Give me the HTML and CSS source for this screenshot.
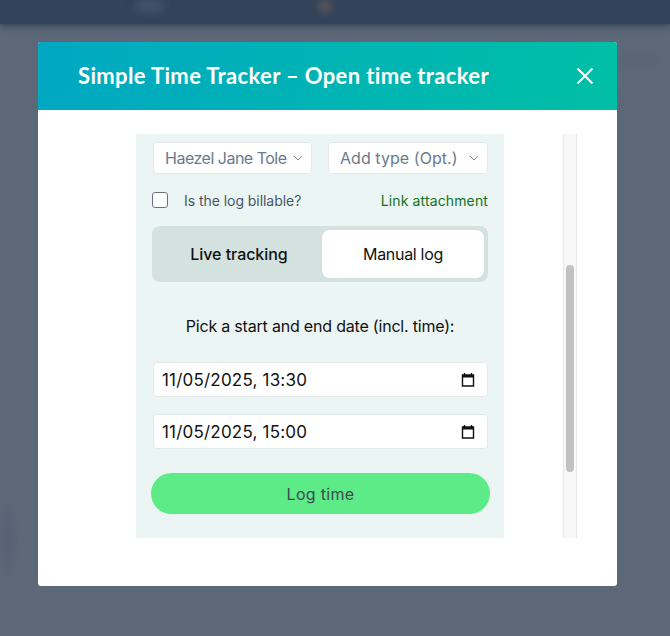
FILE: index.html
```html
<!DOCTYPE html>
<html lang="en">
<head>
  <meta charset="UTF-8">
  <meta name="viewport" content="width=device-width, initial-scale=1.0">
  <title>Simple Time Tracker</title>
  <link rel="stylesheet" href="styles.css">
</head>
<body>

  <div class="backdrop">
    <div class="topbar">
      <span class="blob blob-nav"></span>
      <span class="blob blob-avatar"></span>
    </div>
  </div>

  <div class="modal">
    <div class="modal-header">
      <h2>Simple Time Tracker – Open time tracker</h2>
      <svg class="close" width="20" height="20" viewBox="0 0 20 20">
        <path d="M2.5 2.5 L17.5 17.5 M17.5 2.5 L2.5 17.5" />
      </svg>
    </div>

    <div class="modal-body">
      <div class="frame">
        <div class="tracker">
          <div class="select-row">
            <div class="select select-person">
              <span>Haezel Jane Tole</span>
              <svg width="10" height="6" viewBox="0 0 10 6"><path d="M1 1 L5 5 L9 1" /></svg>
            </div>
            <div class="select select-type">
              <span>Add type (Opt.)</span>
              <svg width="10" height="6" viewBox="0 0 10 6"><path d="M1 1 L5 5 L9 1" /></svg>
            </div>
          </div>

          <div class="billable-row">
            <label class="billable">
              <input type="checkbox">
              Is the log billable?
            </label>
            <a class="attach" href="#">Link attachment</a>
          </div>

          <div class="toggle">
            <div class="toggle-item">Live tracking</div>
            <div class="toggle-item active">Manual log</div>
          </div>

          <p class="pick">Pick a start and end date (incl. time):</p>

          <div class="date-input">
            <span>11/05/2025, 13:30</span>
            <svg width="16" height="16" viewBox="0 0 16 16"><path d="M4.5 1 V3 M11.5 1 V3 M2.5 3 H13.5 V14 H2.5 Z" class="cal-outline" /><path d="M2.5 3 H13.5 V5.5 H2.5 Z" class="cal-top" /></svg>
          </div>
          <div class="date-input">
            <span>11/05/2025, 15:00</span>
            <svg width="16" height="16" viewBox="0 0 16 16"><path d="M4.5 1 V3 M11.5 1 V3 M2.5 3 H13.5 V14 H2.5 Z" class="cal-outline" /><path d="M2.5 3 H13.5 V5.5 H2.5 Z" class="cal-top" /></svg>
          </div>

          <button class="log-btn">Log time</button>
        </div>
      </div>
      <div class="scrollbar"><div class="thumb"></div></div>
    </div>
  </div>

</body>
</html>
```

FILE: styles.css
```css
html, body { height: 100%; }
body {
  margin: 0;
  background: #5c6778;
  font-family: Inter, "Liberation Sans", sans-serif;
  overflow: hidden;
}

.backdrop {
  height: 100%;
  background:
    radial-gradient(ellipse 30px 10px at 640px 60px, #586474, #5c677800),
    radial-gradient(ellipse 12px 40px at 8px 540px, #566174, #5c677800);
}
.topbar {
  height: 24px;
  background: #334359;
  box-shadow: 0 2px 6px #334359;
  display: flex;
  gap: 155px;
  padding-left: 135px;
}
.blob { display: block; height: 12px; border-radius: 6px; filter: blur(4px); }
.blob-nav { width: 30px; background: #46536a; }
.blob-avatar { width: 10px; background: #6b5f5c; }

.modal {
  position: absolute;
  top: 42px;
  left: 38px;
  width: 579px;
  height: 544px;
  background: white;
  border-radius: 3px;
  overflow: hidden;
}
.modal-header {
  height: 68px;
  padding: 0 22px 0 40px;
  display: flex;
  align-items: center;
  justify-content: space-between;
  background: linear-gradient(100deg, #00a8c2, #00bfa6);
}
.modal-header h2 {
  margin: 0 0 2px;
  color: white;
  font-family: Lato, sans-serif;
  font-size: 22px;
  font-weight: 700;
  letter-spacing: 0.36px;
}
.close { fill: none; stroke: white; stroke-width: 2; }

.modal-body {
  display: flex;
  padding: 24px 40px 0 98px;
  gap: 59px;
  height: 404px;
}
.frame { width: 368px; background: #ebf5f3; }
.tracker { padding: 8px 16px 0 16px; }

.select-row { display: flex; gap: 16px; padding-left: 1px; }
.select {
  height: 32px;
  padding: 0 8px 0 11px;
  display: flex;
  align-items: center;
  justify-content: space-between;
  background: white;
  border: 1px solid #e5e9ec;
  border-radius: 4px;
  box-sizing: border-box;
  color: #6b7a8c;
  font-size: 16px;
}
.select-person { width: 159px; letter-spacing: -0.5px; }
.select-type { width: 160px; letter-spacing: 0.05px; }
.select svg { flex: none; fill: none; stroke: #7d8894; stroke-width: 1; }

.billable-row {
  margin-top: 17px;
  display: flex;
  align-items: center;
  justify-content: space-between;
  font-size: 14px;
  height: 18px;
}
.billable { display: flex; align-items: center; gap: 16px; color: #475569; letter-spacing: -0.05px; }
.billable input {
  appearance: none;
  width: 16px;
  height: 16px;
  margin: 0;
  background: white;
  border: 1px solid #6b7280;
  border-radius: 3px;
}
.attach { color: #15711c; text-decoration: none; letter-spacing: 0.13px; }

.toggle {
  margin-top: 17px;
  height: 56px;
  padding: 4px;
  display: flex;
  background: #d4e2df;
  border-radius: 8px;
  box-sizing: border-box;
}
.toggle-item {
  flex: 1;
  display: flex;
  align-items: center;
  justify-content: center;
  color: #111;
  font-size: 16px;
  font-weight: 500;
  letter-spacing: -0.05px;
}
.toggle-item.active {
  flex: none;
  width: 162px;
  background: white;
  border-radius: 8px;
  font-weight: 400;
  letter-spacing: -0.3px;
}

.pick {
  margin: 34px 0 26px;
  text-align: center;
  color: #111;
  font-size: 16px;
  line-height: 20px;
  letter-spacing: -0.2px;
}

.date-input {
  height: 35px;
  margin: 0 0 17px 1px;
  padding: 0 11px 0 8px;
  display: flex;
  align-items: center;
  justify-content: space-between;
  background: white;
  border: 1px solid #e5e9ec;
  border-radius: 4px;
  box-sizing: border-box;
  color: #111;
  font-size: 17px;
  letter-spacing: 0.2px;
}
.cal-outline { fill: none; stroke: #111; stroke-width: 1.4; }
.cal-top { fill: #111; }

.log-btn {
  display: block;
  width: 339px;
  height: 41px;
  margin: 24px 0 0 -1px;
  background: #5deb88;
  color: #3d4a55;
  font-family: inherit;
  font-size: 16px;
  font-weight: 400;
  letter-spacing: 0.3px;
  border: none;
  border-radius: 21px;
}

.scrollbar {
  width: 14px;
  background: #f8f8f8;
  border-left: 1px solid #e8e8e8;
  border-right: 1px solid #e8e8e8;
  box-sizing: border-box;
  padding: 131px 2px 0;
}
.thumb { height: 207px; background: #c1c1c1; border-radius: 4px; }
```
